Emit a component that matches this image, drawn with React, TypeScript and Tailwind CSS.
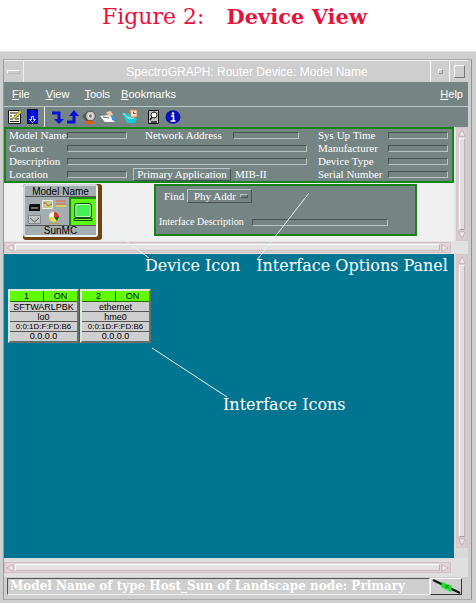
import React from "react";

const serif = "font-['Liberation_Serif',serif]";
const callout = "font-['DejaVu_Serif',serif] text-[16px] leading-[20px] text-white whitespace-nowrap";
const sunken = "border border-t-[#465353] border-l-[#465353] border-b-[#b8c4c4] border-r-[#b8c4c4]";
const raised = "border border-t-[#b8c4c4] border-l-[#b8c4c4] border-b-[#465353] border-r-[#465353]";

function Field({ id, label, labelClass = "w-[58px]", boxClass = "w-[60px]" }: { id: string; label: string; labelClass?: string; boxClass?: string }) {
  return (
    <div className="flex h-[13px] items-center">
      <label htmlFor={id} className={`${labelClass} shrink-0 whitespace-nowrap`}>{label}</label>
      <input id={id} className={`block h-[7px] min-w-0 bg-transparent ${sunken} ${boxClass}`} />
    </div>
  );
}

function Arrow({ dir }: { dir: "up" | "down" | "left" | "right" }) {
  const d = { up: "M5 1 9 9H1Z", down: "M1 1H9L5 9Z", left: "M1 5 9 1V9Z", right: "M1 1 9 5 1 9Z" }[dir];
  return (
    <svg viewBox="0 0 10 10" className="block size-2 shrink-0">
      <path d={d} fill="#eeeaeb" stroke="#b9a9ae" />
    </svg>
  );
}

function VScroll() {
  return (
    <div className="flex h-full w-3 flex-col items-center gap-px border border-[#d3c6ca] bg-[#d9ccd0] py-px">
      <button aria-label="Scroll up"><Arrow dir="up" /></button>
      <div className="w-[6px] flex-1 border border-t-white border-l-white border-r-[#bfb0b4] border-b-[#a89b9f] bg-[#e0dede]" />
      <button aria-label="Scroll down"><Arrow dir="down" /></button>
    </div>
  );
}

function HScroll() {
  return (
    <div className="flex h-[11px] items-center gap-px border border-[#d0c1c5] bg-[#dfd5d8] px-px">
      <button aria-label="Scroll left"><Arrow dir="left" /></button>
      <div className="h-[7px] flex-1 border border-t-white border-l-white border-r-[#bfb0b4] border-b-[#c8babe] bg-[#e3e1e1]" />
      <button aria-label="Scroll right"><Arrow dir="right" /></button>
    </div>
  );
}

function Tool({ label, className, children }: { label: string; className: string; children: React.ReactNode }) {
  return (
    <button aria-label={label} className={`h-4 shrink-0 ${className}`}>
      <svg viewBox="0 0 16 16" preserveAspectRatio="xMidYMid meet" className="block size-4">{children}</svg>
    </button>
  );
}

function Toolbar() {
  return (
    <div className="flex h-[20px] items-center bg-[#758584] pl-[3px]">
      <Tool label="Edit" className="w-4">
        <path d="M1.500 1.500h12v13h-12z" fill="#f5f5dc" stroke="#111" />
        <path d="M3 4h8M3 7h2M7 7h5M3 10h3M8 10h4M3 12.500h9" stroke="#222" strokeWidth="1.200" />
        <path d="m6 9 7-8 2 2-7 7Z" fill="#d9cf35" stroke="#555" strokeWidth=".5" />
      </Tool>
      <Tool label="Save" className="ml-[2px] w-4">
        <path d="M2.500 .5h10v14h-10z" fill="#0510d8" stroke="#111" />
        <path d="M4.500 1v5M10.500 1v5" stroke="#000060" />
        <path d="M6.500 7.500h2v3h2l-3 3-3-3h2Z" fill="#0510d8" stroke="#e8e8ff" />
      </Tool>
      <div className="ml-[3px] h-[20px] w-px bg-[#e5eaea]" />
      <Tool label="Go down" className="ml-[5px] w-4">
        <path d="M2 4h7v8" fill="none" stroke="#0712d5" strokeWidth="3" />
        <path d="M4 10h10l-5 5Z" fill="#0712d5" />
      </Tool>
      <Tool label="Go up" className="w-4">
        <path d="M1 13h7V5" fill="none" stroke="#0712d5" strokeWidth="3" />
        <path d="M3 7h10L8 1Z" fill="#0712d5" />
      </Tool>
      <Tool label="Find" className="w-4">
        <path d="M4 10h7l1 5H3Z" fill="#e06018" />
        <path d="M0 7 6 2l2 9-4 1Z" fill="#555" />
        <circle cx="8.500" cy="7" r="4.800" fill="#d0c8c2" stroke="#555" />
        <circle cx="8.500" cy="7" r="2.200" fill="#777" stroke="#eee" />
      </Tool>
      <Tool label="Annotate" className="ml-[2px] w-4">
        <path d="m0 7 10-1 5 7H5Z" fill="#fff" />
        <path d="m6 3 5-1 2 4-4 2Z" fill="#f0c7a4" />
        <path d="m11 6 4 2 1 5-4-2Z" fill="#3a93d5" />
        <path d="m3 8 6 1" stroke="#666" />
      </Tool>
      <Tool label="Note" className="ml-[6px] w-4">
        <path d="m0 4 8 1 7 5-2 4H5Z" fill="#16cbd4" />
        <path d="m1 4 5 5h6" fill="none" stroke="#e9ffff" />
        <path d="M8 1h7v7H9Z" fill="#f6eadc" stroke="#d87b3a" />
        <path d="M11.500 2.500v2h2" fill="none" stroke="#a22" />
      </Tool>
      <Tool label="Inspect" className="ml-[7px] w-4">
        <path d="M3.500 1.500h10v13h-10z" fill="#b9bdbd" stroke="#111" />
        <circle cx="9" cy="6" r="3" fill="#fff" stroke="#222" />
        <path d="m7 8-2 3M6 13h6" stroke="#222" strokeWidth="1.500" />
      </Tool>
      <Tool label="Information" className="ml-[4px] w-4">
        <ellipse cx="8" cy="8" rx="7.500" ry="6.800" fill="#0910b5" />
        <circle cx="8" cy="4.500" r="1.300" fill="#fff" />
        <path d="M6 7h2.500v5M5.500 12h5" fill="none" stroke="#fff" strokeWidth="1.600" />
      </Tool>
    </div>
  );
}

function DeviceIcon() {
  return (
    <button className="block h-[56px] w-[79px] rounded-[3px] bg-[#70420c] pr-[4px] pb-[3px] text-[10px] leading-[10px] text-black">
      <div className="flex h-full flex-col rounded-[3px] border-2 border-t-[#d2d6d8] border-l-[#d2d6d8] border-r-[#edf0f0] border-b-[#edf0f0] bg-[#a4aeb1]">
        <div className="h-[11px] border-b border-[#555] leading-[11px]">Model Name</div>
        <div className="flex flex-1">
          <svg viewBox="0 0 44 28" className="h-[28px] w-[44px] shrink-0">
            <path d="M5 7h10v7H4V9Z" fill="#111" /><path d="M6 11h7" stroke="#ccc" />
            <path d="M17.500 3.500h10v8h-10z" fill="#c6cc84" stroke="#eee" /><path d="m18 6 3 0 2 3 4-2" stroke="#b63" fill="none" />
            <path d="M31 4h10M31 7h10" stroke="#cf7a5e" strokeWidth="1.500" /><path d="M31 9h10" stroke="#d6d25f" strokeWidth="2" />
            <path d="M3.500 18.500h12v8h-12z" fill="#bfc6c8" stroke="#888" /><path d="m5 21 4.500 4 4.500-4" fill="none" stroke="#555" />
            <circle cx="29" cy="20" r="5" fill="#eee04a" /><path d="M29 20V15a5 5 0 0 1 5 5Z" fill="#d33" /><path d="M29 20h-5a5 5 0 0 1 5-5Z" fill="#fff" /><path d="m29 20 3 4 2-4Z" fill="#151" />
            <path d="M24 26.500h10" stroke="#be9a58" />
          </svg>
          <svg viewBox="0 0 26 28" className="h-[28px] min-w-0 flex-1" preserveAspectRatio="none">
            <path d="M0 0h26v28H0z" fill="#5df710" /><path d="M1 28V1h25" stroke="#168b0b" strokeWidth="2" fill="none" />
            <rect x="6" y="7" width="15" height="13" rx="2" fill="#46ef55" stroke="#b8ffb0" strokeWidth="2" />
            <rect x="5.500" y="6.500" width="16" height="14" rx="2" fill="none" stroke="#0a5010" />
            <path d="M5 21.500h17v2H5z" fill="#7bff35" stroke="#0a5010" />
          </svg>
        </div>
        <div className="h-[10px] border-t border-[#555] leading-[9px]">SunMC</div>
      </div>
    </button>
  );
}

const ports = [
  { n: "1", name: "SFTWARLPBK", ifc: "lo0" },
  { n: "2", name: "ethernet", ifc: "hme0" },
];

function PortIcon({ n, name, ifc }: { n: string; name: string; ifc: string }) {
  const row = "h-[10px] border-b border-[#555] bg-[#cfcfd0] leading-[10px]";
  return (
    <button className="block w-[71px] border-2 border-t-[#dce6d8] border-l-[#dce6d8] border-r-[#64716d] border-b-[#64716d] text-center text-[9px] text-black">
      <div className="flex h-[11px] border-b border-[#246b00] bg-[#5fff00] leading-[11px]">
        <span className="flex-1 border-r border-[#1d4b00]">{n}</span>
        <span className="flex-1">ON</span>
      </div>
      <div className={row}>{name}</div>
      <div className={row}>{ifc}</div>
      <div className={`${row} text-[8px]`}>0:0:1D:F:FD:B6</div>
      <div className="h-[9px] bg-[#cfcfd0] leading-[9px]">0.0.0.0</div>
    </button>
  );
}

function MenuItem({ children, className = "" }: { children: string; className?: string }) {
  return <button className={className}><span className="underline">{children[0]}</span>{children.slice(1)}</button>;
}

export default function App() {
  return (
    <main className="relative bg-white font-['Liberation_Sans',sans-serif] text-[11px]">
      <h1 className="flex h-[51px] justify-center gap-[22px] pt-[3px] pr-[7px] font-['DejaVu_Serif',serif] text-[22px] leading-[27px] text-[#e5123c]">
        <span>Figure 2:</span>
        <b className="text-[21px]">Device View</b>
      </h1>

      <section className="border-t border-[#e2e2e2] bg-[#cecece] pt-[7px] pr-[4px] pb-[5px] pl-[3px]">
        <div className="border border-t-[#aaa] border-l-[#999] border-r-[#929292] border-b-[#aaa] pr-[3px]">
          <header className="flex h-[22px] items-stretch border-t border-[#eee] text-white">
            <button aria-label="Window menu" className="flex w-5 items-center justify-center border-r border-[#eee]">
              <span className="h-[4px] w-[13px] border border-t-white border-l-white border-r-[#bbb] border-b-[#bbb]" />
            </button>
            <div className="flex-1 pl-[40px] text-center text-[12px] leading-[22px]">SpectroGRAPH: Router Device: Model Name</div>
            <button aria-label="Minimize" className="flex w-[19px] items-center justify-center border-l border-white">
              <span className="size-[5px] border border-t-white border-l-white border-r-[#999] border-b-[#999]" />
            </button>
            <button aria-label="Maximize" className="flex w-[19px] items-center justify-center border-l border-white">
              <span className="h-[13px] w-[11px] border border-t-white border-l-white border-r-[#777] border-b-[#777]" />
            </button>
          </header>

          <nav className="flex h-[25px] items-center border-b border-[#bac7c7] bg-[#758584] pr-[5px] pl-[8px] text-white">
            <MenuItem>File</MenuItem>
            <MenuItem className="ml-[16px]">View</MenuItem>
            <MenuItem className="ml-[15px]">Tools</MenuItem>
            <MenuItem className="ml-[11px]">Bookmarks</MenuItem>
            <MenuItem className="ml-auto">Help</MenuItem>
          </nav>
          <Toolbar />

          <div className="flex bg-[#e6e5e5]">
            <div className="min-w-0 flex-1">
              <div className={`flex border-2 border-[#168519] bg-[#758584] pr-[4px] pl-[3px] text-[11px] leading-[13px] text-white ${serif}`}>
                <div className="w-[298px]">
                  <div className="flex gap-[18px]">
                    <Field id="model" label="Model Name" />
                    <Field id="network" label="Network Address" labelClass="w-[88px]" boxClass="w-[66px]" />
                  </div>
                  <Field id="contact" label="Contact" boxClass="w-[240px]" />
                  <Field id="description" label="Description" boxClass="w-[240px]" />
                  <div className="flex items-center">
                    <Field id="location" label="Location" />
                    <button className={`ml-[6px] h-[13px] w-[98px] leading-[11px] ${raised}`}>Primary Application</button>
                    <span className="ml-[4px]">MIB-II</span>
                  </div>
                </div>
                <div className="ml-auto">
                  <Field id="uptime" label="Sys Up Time" labelClass="w-[70px]" />
                  <Field id="manufacturer" label="Manufacturer" labelClass="w-[70px]" />
                  <Field id="type" label="Device Type" labelClass="w-[70px]" />
                  <Field id="serial" label="Serial Number" labelClass="w-[70px]" />
                </div>
              </div>

              <div className="flex h-[58px] items-start bg-[#f0f0f0] pt-[1px] pl-[19px]">
                <DeviceIcon />
                <div className={`ml-[52px] h-[52px] w-[263px] border-2 border-[#168519] bg-[#758584] text-white ${serif}`}>
                  <div className="flex items-center pt-[3px] pl-[8px] leading-[13px]">
                    <label htmlFor="find" className="w-[23px]">Find</label>
                    <div className="relative">
                      <select id="find" className={`block h-[14px] w-[65px] appearance-none bg-transparent pl-[6px] leading-[12px] ${raised}`}>
                        <option>Phy Addr</option>
                      </select>
                      <span className={`pointer-events-none absolute top-[5px] right-[4px] h-[4px] w-[8px] ${raised}`} />
                    </div>
                  </div>
                  <div className="flex items-center pt-[13px] pl-[3px] text-[10px] leading-[12px]">
                    <label htmlFor="ifdesc" className="w-[93px]">Interface Description</label>
                    <input id="ifdesc" className={`block h-[7px] w-[136px] bg-transparent ${sunken}`} />
                  </div>
                </div>
              </div>
            </div>
            <div className="ml-[2px]"><VScroll /></div>
          </div>

          <div className="bg-[#e2e1e1] py-[1px] pr-[17px]"><HScroll /></div>

          <div className="flex bg-[#dad9d9]">
            <div className="h-[304px] min-w-0 flex-1 bg-[#007592]">
              <div className={`flex h-[35px] gap-[16px] pt-[2px] pl-[141px] ${callout}`}>
                <span>Device Icon</span>
                <span>Interface Options Panel</span>
              </div>
              <div className="flex gap-[1px] pl-[4px]">
                {ports.map((p) => <PortIcon key={p.n} {...p} />)}
              </div>
              <div className={`pt-[52px] pl-[219px] ${callout}`}>Interface Icons</div>
            </div>
            <div className="ml-[2px] h-[294px]"><VScroll /></div>
          </div>

          <div className="bg-[#e0dfdf] pt-[4px] pr-[17px] pb-[4px]"><HScroll /></div>

          <footer className="flex h-[19px] items-stretch pl-[3px]">
            <div className="my-px flex-1 overflow-hidden border border-t-[#555] border-l-[#555] border-r-[#eee] border-b-[#eee] pl-[2px] font-['DejaVu_Serif',serif] text-[12px] leading-[15px] font-bold whitespace-nowrap text-white">
              Model Name of type Host_Sun of Landscape node: Primary
            </div>
            <button aria-label="Connection status" className="my-px mr-[6px] w-8 border border-t-white border-l-white border-r-[#333] border-b-[#333]">
              <svg viewBox="0 0 30 15" className="block h-[15px] w-[30px]">
                <path d="m2 1 27 13" stroke="#111" strokeWidth="2" />
                <path d="m11 3 10 4-1 6-10-5Z" fill="#16e52a" />
                <path d="m14 6 4 3M18 6l-4 3" stroke="#066b10" />
              </svg>
            </button>
          </footer>
          <div className="h-[3px]" />
        </div>
      </section>

      <svg viewBox="0 0 476 603" className="pointer-events-none absolute top-0 left-0 h-[603px] w-[476px]" fill="none" stroke="#e6f4f6">
        <path d="M104 225 149 258M309 193 257 260M152 348l75 49" />
      </svg>
    </main>
  );
}
